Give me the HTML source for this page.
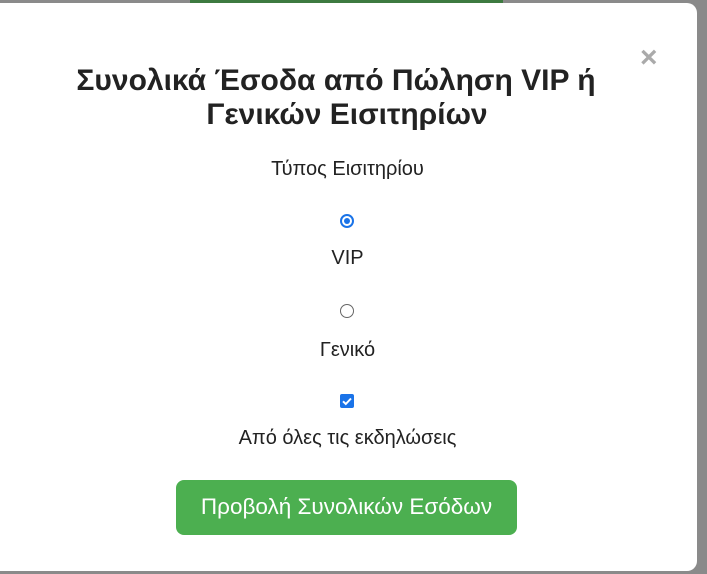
<!DOCTYPE html>
<html><head><meta charset="utf-8"><style>
body{margin:0;width:707px;height:574px;background:#8a8a8a;position:relative;overflow:hidden;font-family:"Liberation Sans",Arial,sans-serif;color:#333}
.top{position:absolute;left:190px;top:-10px;width:313px;height:13px;background:#3d7a40}
.modal{position:absolute;left:-10px;top:3px;width:707px;height:568px;background:#fff;border-radius:10px}
h2{position:absolute;width:690px;margin:0;text-align:center;font-size:30px;line-height:34px;font-weight:bold;color:#222}
.x{position:absolute;left:640px;top:43px;font-size:30px;font-weight:bold;color:#aaa;line-height:30px}
.t{position:absolute;left:10px;width:675px;text-align:center;font-size:20px;color:#222}
.radio{position:absolute;left:340px;width:14px;height:14px;border-radius:50%;border:1px solid #666;box-sizing:border-box}
.radio.on{border:2px solid #1a73e8;background:#fff}
.radio.on::after{content:"";position:absolute;left:2px;top:2px;width:6px;height:6px;border-radius:50%;background:#1a73e8}
.cb{position:absolute;left:340px;top:394px;width:14px;height:14px;border-radius:2px;background:#1a73e8}
.btn{position:absolute;left:176px;top:480px;width:341px;height:55px;background:#4caf50;border-radius:8px;color:#fff;font-size:22.5px;text-align:center;line-height:54px}
</style></head><body>
<div class="top"></div>
<div class="modal"></div>
<div class="x">×</div>
<h2 style="left:-9px;top:64px">Συνολικά Έσοδα από Πώληση VIP ή</h2>
<h2 style="left:2px;top:98px">Γενικών Εισιτηρίων</h2>
<div class="t" style="top:158px">Τύπος Εισιτηρίου</div>
<div class="radio on" style="top:214px"></div>
<div class="t" style="top:247px">VIP</div>
<div class="radio" style="top:304px"></div>
<div class="t" style="top:339px">Γενικό</div>
<div class="cb"><svg width="14" height="14" viewBox="0 0 14 14"><path d="M3 7.3L5.8 10L11 4.5" stroke="#fff" stroke-width="2" fill="none"/></svg></div>
<div class="t" style="top:427px">Από όλες τις εκδηλώσεις</div>
<div class="btn">Προβολή Συνολικών Εσόδων</div>
</body></html>
